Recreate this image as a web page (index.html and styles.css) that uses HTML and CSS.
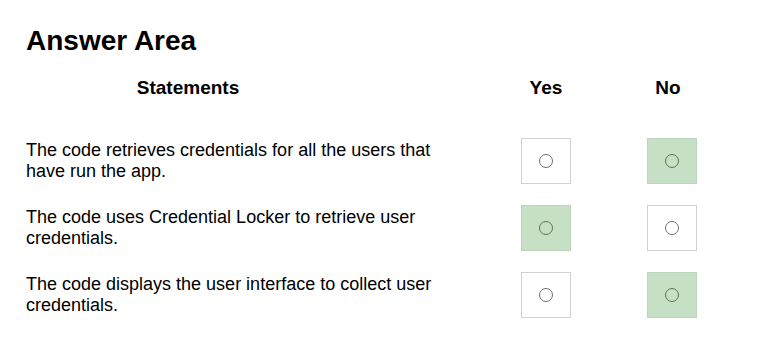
FILE: index.html
```html
<!DOCTYPE html>
<html lang="en">
<head>
<meta charset="utf-8">
<title>Answer Area</title>
<link rel="stylesheet" href="styles.css">
</head>
<body>
<div class="page">
  <h1 class="title">Answer Area</h1>
  <div class="grid header">
    <div class="h-statements">Statements</div>
    <div class="h-yes">Yes</div>
    <div class="h-no">No</div>
  </div>
  <div class="rows">
    <div class="grid row">
      <div class="statement">The code retrieves credentials for all the users that have run the app.</div>
      <div class="cell"><div class="box"><span class="radio"></span></div></div>
      <div class="cell"><div class="box selected"><span class="radio"></span></div></div>
    </div>
    <div class="grid row">
      <div class="statement">The code uses Credential Locker to retrieve user credentials.</div>
      <div class="cell"><div class="box selected"><span class="radio"></span></div></div>
      <div class="cell"><div class="box"><span class="radio"></span></div></div>
    </div>
    <div class="grid row">
      <div class="statement">The code displays the user interface to collect user credentials.</div>
      <div class="cell"><div class="box"><span class="radio"></span></div></div>
      <div class="cell"><div class="box selected"><span class="radio"></span></div></div>
    </div>
  </div>
</div>
</body>
</html>
```
FILE: styles.css
```css
html, body {
  margin: 0;
  padding: 0;
  background: #ffffff;
}
.page {
  width: 771px;
  height: 338px;
  box-sizing: border-box;
  padding: 25px 0 0 26px;
  font-family: "Liberation Sans", Arial, sans-serif;
  color: #000;
}
.title {
  margin: 0;
  font-size: 28px;
  line-height: 32px;
  font-weight: bold;
}
.grid {
  display: grid;
  grid-template-columns: 440px 160px 92px;
}
.header {
  margin-top: 20px;
  font-size: 19px;
  line-height: 22px;
  font-weight: bold;
}
.h-statements {
  width: 324px;
  text-align: center;
}
.h-yes {
  text-align: center;
}
.h-no {
  text-align: center;
  padding-right: 8px;
}
.rows {
  margin-top: 39px;
  display: flex;
  flex-direction: column;
  gap: 21px;
}
.row {
  align-items: start;
}
.statement {
  font-size: 18px;
  line-height: 21px;
  padding-top: 2px;
}
.cell {
  display: flex;
  justify-content: center;
}
.box {
  width: 50px;
  height: 46px;
  box-sizing: border-box;
  border: 1px solid #d2d2d2;
  background: #fff;
  display: flex;
  align-items: center;
  justify-content: center;
}
.box.selected {
  background: #c6e0c6;
  border-color: #bcd3bc;
}
.radio {
  width: 14px;
  height: 14px;
  box-sizing: border-box;
  border: 1px solid #707070;
  border-radius: 50%;
}
.box.selected .radio {
  border-color: #5f6f5f;
}
```
